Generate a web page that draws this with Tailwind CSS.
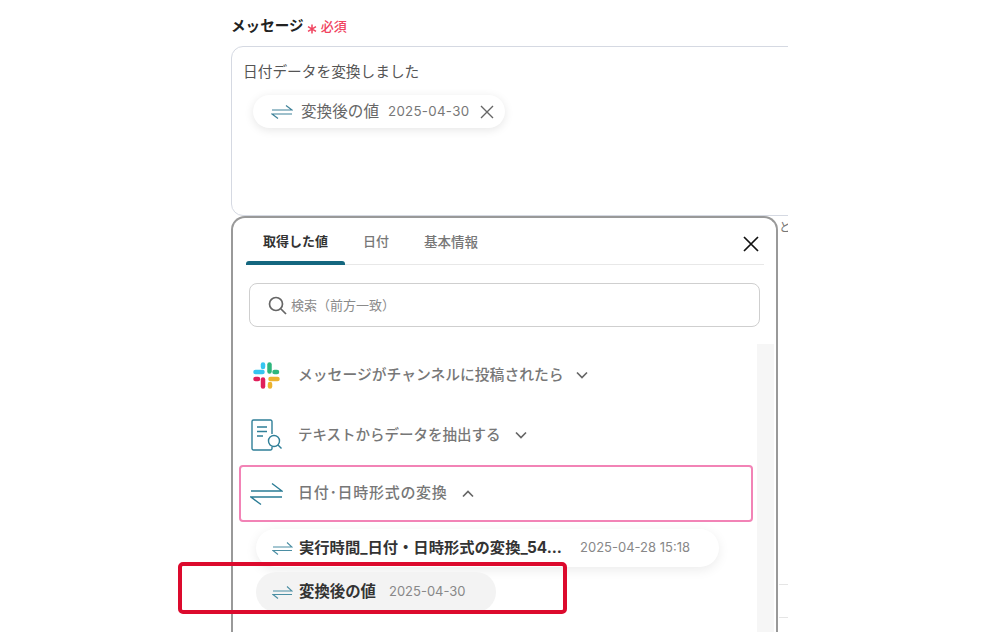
<!DOCTYPE html>
<html lang="ja">
<head>
<meta charset="utf-8"/>
<title>メッセージ</title>
<script src="https://cdn.jsdelivr.net/npm/@tailwindcss/browser@4"></script>
</head>
<body class="bg-white">
<div class="relative w-[1000px] h-[632px] overflow-hidden font-['Inter','Noto_Sans_CJK_JP',sans-serif] text-[#333]">
  <div class="ml-[231px] w-[557px] h-[632px] overflow-hidden">
    <!-- label -->
    <div class="flex items-center h-[46px] pt-[8px]">
      <span class="text-[14.6px] font-bold text-[#222]">メッセージ</span>
      <svg class="ml-[3px] mt-[4px] w-[10px] h-[10px] text-[#f0435f]" viewBox="0 0 10 10" fill="none" stroke="currentColor" stroke-width="1.5"><path d="M5 0.500v9M1 2.700l8 4.600M9 2.700L1 7.300"/></svg>
      <span class="ml-[4px] text-[13px] font-medium text-[#f0435f]">必須</span>
    </div>
    <!-- textarea -->
    <div class="w-[580px] h-[170px] border border-[#d5d9e2] rounded-[12px] px-[11px] pt-[15px]">
      <p class="text-[14.7px] leading-[20px] text-[#555]">日付データを変換しました</p>
      <div class="mt-[13px] ml-[10px] inline-flex items-center h-[33px] w-[252px] rounded-full bg-white shadow-[0_2px_10px_rgba(0,0,0,0.1)] pl-[18px]">
        <svg class="w-[22px] h-[16px] text-[#3f8299]" viewBox="0 0 22 16" fill="none" stroke="currentColor" stroke-width="1.2"><path d="M1 6h20L15 1.500M21 10H1l6 4.500"/></svg>
        <span class="ml-[8px] text-[15.6px] text-[#666]">変換後の値</span>
        <span class="ml-[9px] text-[13.300px] tracking-[0.3px] text-[#777]">2025-04-30</span>
        <svg class="ml-[11px] w-[14px] h-[14px] text-[#666]" viewBox="0 0 14 14" fill="none" stroke="currentColor" stroke-width="1.4"><path d="M1 1l12 12M13 1L1 13"/></svg>
      </div>
    </div>
    <div class="flex">
      <!-- value picker -->
      <div class="w-[547px] h-[440px] shrink-0 border-2 border-b-0 border-[#999] rounded-t-[14px] bg-white">
        <div class="relative flex h-[47px] ml-[13px] mr-[12px] pt-[2px] border-b border-[#e8e8e8] text-[13px] font-medium">
          <div class="relative w-[99px] flex items-center justify-center font-bold text-[#333]">取得した値<span class="absolute bottom-[-1px] left-0 w-full h-[4px] rounded-t-[3px] bg-[#14677f]"></span></div>
          <div class="w-[62px] flex items-center justify-center text-[#777]">日付</div>
          <div class="w-[88px] flex items-center justify-center text-[13.500px] text-[#777]">基本情報</div>
          <svg class="absolute right-[5px] top-[18px] w-[16px] h-[16px] text-[#111]" viewBox="0 0 16 16" fill="none" stroke="currentColor" stroke-width="1.7"><path d="M1 1l14 14M15 1L1 15"/></svg>
        </div>
        <div class="ml-[16px] mr-[16px] mt-[18px] h-[44px] flex items-center border border-[#cfcfcf] rounded-[8px] pl-[18px]">
          <svg class="w-[19px] h-[19px] text-[#666]" viewBox="0 0 19 19" fill="none" stroke="currentColor" stroke-width="1.7"><circle cx="8" cy="8" r="6.500"/><path d="M13 13l5 5"/></svg>
          <span class="ml-[4px] mt-[1px] text-[13px] text-[#8a8a8a]">検索（前方一致）</span>
        </div>
        <div class="flex mt-[17px] h-[300px]">
          <div class="w-[524px] shrink-0 pt-px pl-px">
            <div class="flex items-center h-[60px] pl-[19px]">
              <svg class="w-[27px] h-[27px]" viewBox="0 0 54 54">
                <g fill="none" stroke-width="9" stroke-linecap="round">
                  <path d="M5 20h14" stroke="#36c5f0"/><path d="M20 5v5" stroke="#36c5f0"/>
                  <path d="M33 5v14" stroke="#2eb67d"/><path d="M48 20h-5" stroke="#2eb67d"/>
                  <path d="M49 34H35" stroke="#ecb22e"/><path d="M34 49v-5" stroke="#ecb22e"/>
                  <path d="M20 49V35" stroke="#e01e5a"/><path d="M5 34h5" stroke="#e01e5a"/>
                </g>
              </svg>
              <span class="ml-[18px] text-[14.800px] font-medium text-[#777]">メッセージがチャンネルに投稿されたら</span>
              <svg class="ml-[12px] w-[12px] h-[8px] text-[#666]" viewBox="0 0 12 8" fill="none" stroke="currentColor" stroke-width="1.7"><path d="M1 1.500l5 5 5-5"/></svg>
            </div>
            <div class="flex items-center h-[60px] pl-[17px]">
              <svg class="w-[31px] h-[32px] text-[#2f7f98]" viewBox="0 0 31 32" fill="none" stroke="currentColor" stroke-width="1.4"><path d="M21 15V2.500a1.500 1.500 0 0 0-1.500-1.500h-17A1.500 1.500 0 0 0 1 2.500v27A1.500 1.500 0 0 0 2.500 31H19.500a1.500 1.500 0 0 0 1.500-1.500V28M6 8h10M6 12.500h10M6 17h6"/><circle cx="23" cy="22" r="5.500"/><path d="M27 26l3.500 3.500"/></svg>
              <span class="ml-[16px] text-[14.500px] font-medium text-[#777]">テキストからデータを抽出する</span>
              <svg class="ml-[14px] w-[12px] h-[8px] text-[#666]" viewBox="0 0 12 8" fill="none" stroke="currentColor" stroke-width="1.7"><path d="M1 1.500l5 5 5-5"/></svg>
            </div>
            <div class="ml-[5px] w-[514px] h-[57px] flex items-center border-2 border-[#f283b6] rounded-[4px] pl-[9px]">
              <svg class="w-[33px] h-[24px] text-[#2a7c95]" viewBox="0 0 33 24" fill="none" stroke="currentColor" stroke-width="1.4"><path d="M1 9h31L22 1.500M32 15H1l10 7.500"/></svg>
              <span class="ml-[15px] text-[15px] tracking-[0.7px] font-medium text-[#777]">日付･日時形式の変換</span>
              <svg class="ml-[14px] w-[12px] h-[8px] text-[#666]" viewBox="0 0 12 8" fill="none" stroke="currentColor" stroke-width="1.7"><path d="M1 6.500l5-5 5 5"/></svg>
            </div>
            <div class="ml-[22px] mt-[7px] w-[463px] h-[38px] flex items-center rounded-full bg-white shadow-[0_3px_12px_rgba(0,0,0,0.08)] pl-[16px]">
              <svg class="w-[21px] h-[15px] text-[#4b8ea3]" viewBox="0 0 21 15" fill="none" stroke="currentColor" stroke-width="1.1"><path d="M1 6h19L15 1.500M20 9.500H1l5 4"/></svg>
              <span class="ml-[6px] w-[264px] text-[15.300px] font-bold text-[#333] whitespace-nowrap">実行時間_日付・日時形式の変換_54...</span>
              <span class="ml-[17px] text-[13px] text-[#888]">2025-04-28 15:18</span>
            </div>
            <div class="ml-[22px] mt-[5px] w-[240px] h-[40px] flex items-center rounded-full bg-[#f3f3f3] pl-[16px]">
              <svg class="w-[21px] h-[15px] text-[#4b8ea3]" viewBox="0 0 21 15" fill="none" stroke="currentColor" stroke-width="1.1"><path d="M1 6h19L15 1.500M20 9.500H1l5 4"/></svg>
              <span class="ml-[6px] text-[15.400px] font-bold text-[#333]">変換後の値</span>
              <span class="ml-[13px] text-[13px] text-[#888]">2025-04-30</span>
            </div>
          </div>
          <div class="w-[17px] bg-[#f6f6f6]"></div>
        </div>
      </div>
      <!-- text behind the picker on the right -->
      <div class="ml-[1px] flex-1 min-w-0 overflow-hidden">
        <p class="mt-[4px] text-[12px] leading-[16px] text-[#777]">と</p>
        <div class="mt-[348px] h-[34px] border-y border-[#e5e5e5]"></div>
      </div>
    </div>
  </div>
  <!-- red callout -->
  <div class="absolute left-[178px] top-[562px] w-[389px] h-[52px] border-[4px] border-[#dc0a2d] rounded-[5px]"></div>
</div>
</body>
</html>
